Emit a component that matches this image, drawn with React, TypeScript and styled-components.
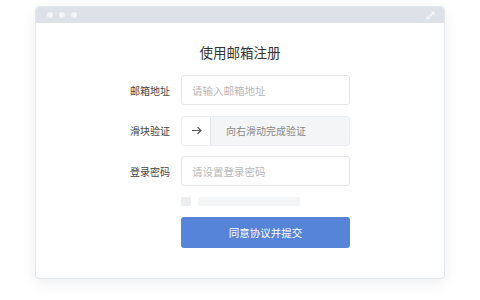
import styled, { createGlobalStyle } from 'styled-components';

const GlobalStyle = createGlobalStyle`
  html, body {
    margin: 0;
    padding: 0;
    background: #ffffff;
    font-family: "Noto Sans CJK SC", "Noto Sans", sans-serif;
  }
`;

const Page = styled.div`
  width: 480px;
  height: 300px;
  padding: 6px 0 0 35px;
  box-sizing: border-box;
`;

const Window = styled.div`
  width: 410px;
  height: 273px;
  box-sizing: border-box;
  background: #fff;
  border: 1px solid #e3e6ea;
  border-radius: 4px;
  box-shadow: 0 4px 14px rgba(30, 40, 60, 0.08);
  overflow: hidden;
  display: flex;
  flex-direction: column;
`;

const TitleBar = styled.div`
  height: 16px;
  flex: none;
  background: #dde1e8;
  display: flex;
  align-items: center;
  padding: 0 9px 0 11px;
  gap: 6px;
`;

const Dot = styled.span`
  width: 6px;
  height: 6px;
  border-radius: 50%;
  background: #f3f5f8;
`;

const Expand = styled.svg`
  margin-left: auto;
`;

const Body = styled.div`
  flex: 1;
  padding-top: 19px;
`;

const Heading = styled.h1`
  margin: 0;
  font-size: 13.5px;
  line-height: 20px;
  font-weight: 400;
  color: #333;
  text-align: center;
`;

const Form = styled.div`
  margin: 13px 0 0 84px;
  display: flex;
  flex-direction: column;
  gap: 10.5px;
`;

const Row = styled.div`
  display: flex;
  align-items: center;
  gap: 11px;
`;

const Label = styled.span`
  width: 50px;
  text-align: right;
  font-size: 10px;
  color: #444;
`;

const Spacer = styled.span`
  width: 50px;
`;

const Field = styled.div`
  width: 169px;
  height: 30px;
  box-sizing: border-box;
  border: 1px solid #e4e6ea;
  border-radius: 3px;
  display: flex;
  align-items: center;
  padding-left: 10px;
  font-size: 10.5px;
  color: #b8b8b8;
`;

const Slider = styled.div`
  width: 169px;
  height: 30px;
  box-sizing: border-box;
  border: 1px solid #eceef1;
  border-radius: 3px;
  background: #f4f5f7;
  display: flex;
  align-items: center;
`;

const Handle = styled.div`
  width: 29px;
  height: 28px;
  box-sizing: border-box;
  background: #fff;
  border-right: 1px solid #e4e6ea;
  border-radius: 2px 0 0 2px;
  display: flex;
  align-items: center;
  justify-content: center;
`;

const SliderText = styled.span`
  padding-left: 15px;
  font-size: 10px;
  color: #888;
`;

const Agree = styled.div`
  display: flex;
  align-items: center;
  gap: 7px;
  height: 10px;
`;

const Check = styled.span`
  width: 10px;
  height: 9px;
  border-radius: 1px;
  background: #eceef0;
`;

const Bar = styled.span`
  width: 102px;
  height: 9px;
  border-radius: 2px;
  background: #f4f5f7;
`;

const Submit = styled.button`
  width: 169px;
  height: 31px;
  border: none;
  border-radius: 3px;
  background: #5584d8;
  color: #fff;
  font-family: inherit;
  font-size: 10.5px;
  padding: 0;
`;

export default function App() {
  return (
    <>
      <GlobalStyle />
      <Page>
        <Window>
          <TitleBar>
            <Dot />
            <Dot />
            <Dot />
            <Expand width="9" height="9" viewBox="0 0 9 9">
              <path d="M1 8 L8 1 M5 1 H8 V4 M1 5 V8 H4" stroke="#f4f6f9" strokeWidth="1.2" fill="none" />
            </Expand>
          </TitleBar>
          <Body>
            <Heading>使用邮箱注册</Heading>
            <Form>
              <Row>
                <Label>邮箱地址</Label>
                <Field>请输入邮箱地址</Field>
              </Row>
              <Row>
                <Label>滑块验证</Label>
                <Slider>
                  <Handle>
                    <svg width="11" height="9" viewBox="0 0 11 9">
                      <path d="M1 4.5 H10 M6.5 1 L10 4.5 L6.5 8" stroke="#555" strokeWidth="1.1" fill="none" />
                    </svg>
                  </Handle>
                  <SliderText>向右滑动完成验证</SliderText>
                </Slider>
              </Row>
              <Row>
                <Label>登录密码</Label>
                <Field>请设置登录密码</Field>
              </Row>
              <Row>
                <Spacer />
                <Agree>
                  <Check />
                  <Bar />
                </Agree>
              </Row>
              <Row>
                <Spacer />
                <Submit>同意协议并提交</Submit>
              </Row>
            </Form>
          </Body>
        </Window>
      </Page>
    </>
  );
}
